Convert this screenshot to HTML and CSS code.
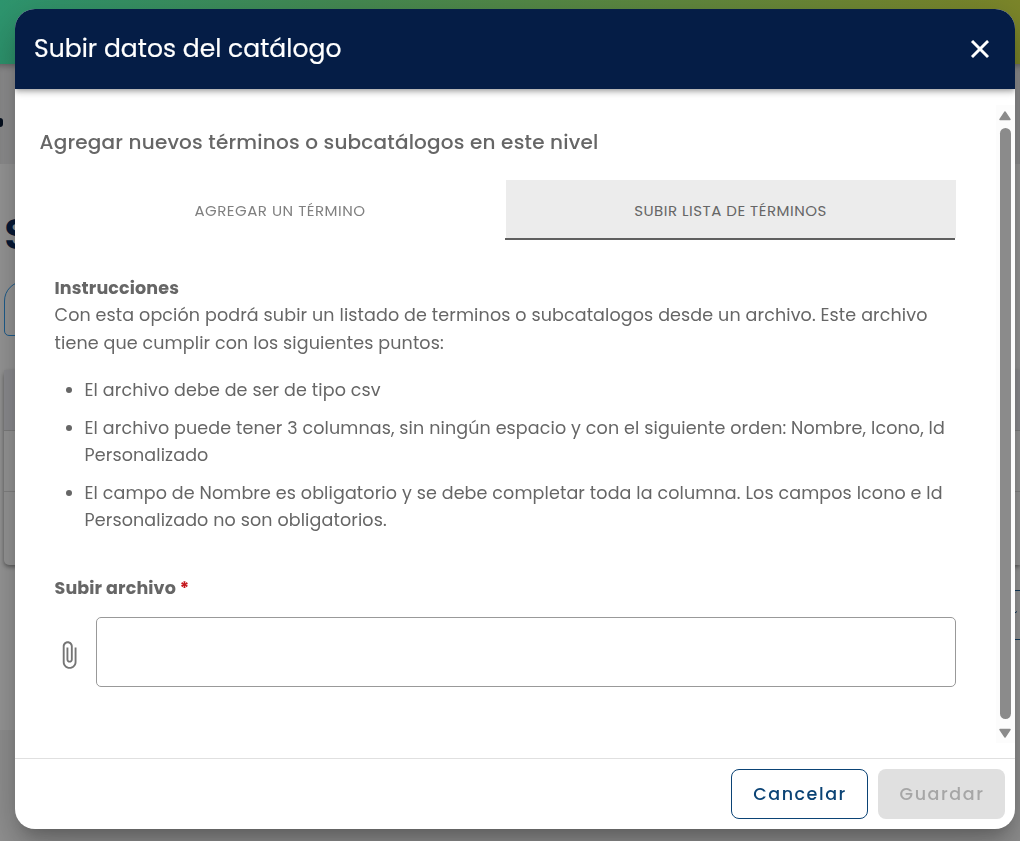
FILE: index.html
```html
<!DOCTYPE html>
<html lang="es">

<head>
    <meta charset="UTF-8">
    <meta name="viewport" content="width=device-width, initial-scale=1.0">
    <title>Subir datos del catálogo</title>
    <link rel="stylesheet" href="styles.css">
</head>

<body>
    <!-- Page behind the dialog -->
    <div class="page" aria-hidden="true">
        <div class="topbar"></div>
        <div class="subheader"><span class="dot"></span></div>
        <div class="content">
            <div class="page-title">S</div>
            <div class="search"></div>
            <div class="table">
                <div class="table-head"></div>
                <div class="table-row"></div>
                <div class="table-row last"></div>
            </div>
            <div class="page-select">
                <svg width="10" height="6" viewBox="0 0 10 6"><path d="M4 4.500 7 2.500" /></svg>
            </div>
        </div>
    </div>

    <div class="dialog" role="dialog" aria-labelledby="dialog-title">
        <header class="dialog-header">
            <h1 id="dialog-title">Subir datos del catálogo</h1>
            <button class="close" aria-label="Cerrar">
                <svg width="30" height="30" viewBox="0 0 24 24"><path d="M19 6.41 17.59 5 12 10.59 6.41 5 5 6.41 10.59 12 5 17.59 6.41 19 12 13.41 17.59 19 19 17.59 13.41 12z" /></svg>
            </button>
        </header>

        <div class="dialog-body">
            <div class="form">
                <h2>Agregar nuevos términos o subcatálogos en este nivel</h2>

                <div class="tabs">
                    <button class="tab">AGREGAR UN TÉRMINO</button>
                    <button class="tab active">SUBIR LISTA DE TÉRMINOS</button>
                </div>

                <div class="instructions">
                    <h3>Instrucciones</h3>
                    <p>Con esta opción podrá subir un listado de terminos o subcatalogos desde un archivo. Este archivo<br>tiene que cumplir con los siguientes puntos:</p>
                    <ul>
                        <li>El archivo debe de ser de tipo csv</li>
                        <li>El archivo puede tener 3 columnas, sin ningún espacio y con el siguiente orden: Nombre, Icono, Id<br>Personalizado</li>
                        <li>El campo de Nombre es obligatorio y se debe completar toda la columna. Los campos Icono e Id<br>Personalizado no son obligatorios.</li>
                    </ul>
                </div>

                <label class="file-label">Subir archivo <span class="required">*</span></label>
                <div class="file-row">
                    <svg class="clip" width="30" height="30" viewBox="0 0 24 24"><path d="M16.5 6v11.5c0 2.21-1.79 4-4 4s-4-1.79-4-4V5c0-1.38 1.12-2.5 2.5-2.5s2.5 1.12 2.5 2.5v10.5c0 .55-.45 1-1 1s-1-.45-1-1V6H10v9.5c0 1.38 1.12 2.5 2.5 2.5s2.5-1.12 2.5-2.5V5c0-2.21-1.79-4-4-4S7 2.79 7 5v12.5c0 3.04 2.46 5.5 5.5 5.5s5.5-2.46 5.5-5.5V6h-1.5z" /></svg>
                    <div class="file-input"></div>
                </div>
            </div>

            <div class="scrollbar">
                <svg width="14" height="11" viewBox="0 0 14 11"><path d="M7 2 12 9.500H2z" /></svg>
                <div class="thumb"></div>
                <svg width="14" height="11" viewBox="0 0 14 11"><path d="M2 1.500H12L7 9z" /></svg>
            </div>
        </div>

        <footer class="dialog-actions">
            <button class="btn btn-cancel">Cancelar</button>
            <button class="btn btn-save" disabled>Guardar</button>
        </footer>
    </div>
</body>

</html>
```
FILE: styles.css
```css
* {
    box-sizing: border-box;
}

body {
    margin: 0;
    height: 841px;
    overflow: hidden;
    font-family: Poppins, Inter, sans-serif;
    font-size: 17.5px;
    letter-spacing: 0.125px;
    line-height: 27.4px;
    color: #666;
    background: #929292;
}

h1,
h2,
h3,
p,
ul {
    margin: 0;
}

button {
    font-family: inherit;
    padding: 0;
    border: none;
    background: none;
}

/* Page behind */
.page {
    height: 841px;
}

.topbar {
    height: 64px;
    background: linear-gradient(90deg, #2e966f, #458b53 34%, #7d872a);
}

.subheader {
    height: 100px;
    padding-top: 54px;
    background: #909091;
    box-shadow: inset 0 6px 6px -4px rgba(0, 0, 0, 0.3);
}

.dot {
    display: block;
    width: 3px;
    height: 9px;
    border-radius: 0 5px 5px 0;
    background: #05101f;
}

.content {
    height: 566px;
    padding: 46px 0 0 4px;
    background: #999;
}

.page-title {
    height: 71px;
    font-size: 43px;
    font-weight: 600;
    line-height: 48px;
    color: #071a38;
}

.search {
    width: 500px;
    height: 55px;
    border: 1px solid #1f5f90;
    border-radius: 20px 0 0 5px;
}

.table {
    height: 195px;
    margin-top: 34px;
    border-radius: 5px 0 0 5px;
    background: #999;
    box-shadow: 0 2px 4px rgba(0, 0, 0, 0.4);
}

.table-head {
    height: 61px;
    border-bottom: 1px solid #808080;
    background: #8f8f93;
}

.table-row {
    height: 61px;
    border-bottom: 1px solid #858585;
}

.table-row.last {
    border: none;
}

.page-select {
    display: flex;
    justify-content: flex-end;
    width: 100px;
    height: 50px;
    margin: 25px 0 0 auto;
    padding-top: 18px;
    border: 1px solid #123a5c;
    border-width: 1px 0;
}

.page-select svg {
    fill: none;
    stroke: #123a5c;
}

/* Dialog */
.dialog {
    position: fixed;
    top: 9px;
    left: 15px;
    display: flex;
    flex-direction: column;
    width: 1000px;
    height: 820px;
    overflow: hidden;
    border-radius: 20px;
    background: #fff;
    box-shadow: 0 11px 15px -7px rgba(0, 0, 0, 0.2), 0 24px 38px 3px rgba(0, 0, 0, 0.14), 0 9px 46px 8px rgba(0, 0, 0, 0.12);
}

.dialog-header {
    display: flex;
    align-items: center;
    justify-content: space-between;
    flex: none;
    height: 80px;
    padding: 0 20.500px 0 19px;
    color: #fff;
    background: #051d46;
    box-shadow: 0 2px 4px -1px rgba(0, 0, 0, 0.2), 0 4px 5px rgba(0, 0, 0, 0.14), 0 1px 10px rgba(0, 0, 0, 0.12);
}

.dialog-header h1 {
    font-size: 25px;
    font-weight: 400;
    letter-spacing: 0.03px;
    -webkit-text-stroke: 0.2px #fff;
}

.close {
    height: 30px;
}

.close svg {
    fill: #fff;
    stroke: #fff;
    stroke-width: 0.4;
}

.dialog-body {
    display: flex;
    flex: none;
    justify-content: space-between;
    height: 669px;
}

.form {
    width: 941px;
    padding: 40px 0 0 24.500px;
}

.form h2 {
    font-size: 20px;
    font-weight: 500;
    letter-spacing: 0.19px;
}

.tabs {
    display: flex;
    height: 60px;
    margin: 24px 0 0 0.5px;
}

.tab {
    width: 450px;
    padding: 1px 1px 0 0;
    font-size: 15px;
    letter-spacing: 0.5px;
    color: #808080;
}

.tab:first-child {
    width: 466px;
    padding-left: 15px;
}

.tab.active {
    position: relative;
    color: #666;
    background: #ececec;
}

/* Ink bar under the selected tab */
.tab.active::after {
    content: "";
    position: absolute;
    bottom: 0;
    left: -1px;
    width: 100%;
    height: 2px;
    background: #5f5f5f;
    box-shadow: 1px 0 #fff;
}

.instructions {
    margin: 34.500px 0 0 15px;
    white-space: nowrap;
}

.instructions h3,
.file-label {
    font-size: 17.5px;
    font-weight: 700;
}

.instructions ul {
    margin-top: 20px;
    padding-left: 30px;
}

.instructions li {
    margin-bottom: 10.300px;
}

.file-label {
    display: block;
    margin: 40.600px 0 0 15px;
}

.required {
    color: #c4161c;
}

.file-row {
    display: flex;
    align-items: center;
    gap: 12px;
    margin: 14.500px 0 0 14.500px;
}

.clip {
    flex: none;
    margin-top: 6px;
    fill: #757575;
}

.file-input {
    flex: none;
    width: 860px;
    height: 70px;
    border: 1px solid #999;
    border-radius: 5px;
}

.scrollbar {
    display: flex;
    flex-direction: column;
    align-items: center;
    justify-content: space-between;
    width: 19px;
    height: 638px;
    margin-top: 16px;
    padding: 5px 1px 4px 0;
    background: #fcfcfc;
}

.scrollbar svg {
    fill: #8b8b8b;
    stroke: #8b8b8b;
    stroke-linejoin: round;
    stroke-width: 1.5;
}

.thumb {
    width: 11px;
    height: 591px;
    margin-bottom: 2px;
    border-radius: 6px;
    background: #8b8b8b;
}

.dialog-actions {
    display: flex;
    justify-content: flex-end;
    gap: 10px;
    flex: 1;
    padding: 10px;
    border-top: 1px solid #e0e0e0;
}

.btn {
    height: 50px;
    padding: 0 0 1px 1px;
    border-radius: 8px;
    font-size: 17.5px;
    font-weight: 500;
    letter-spacing: 1.56px;
}

.btn-cancel {
    width: 137px;
    border: 1px solid #0b4375;
    color: #0b4375;
}

.btn-save {
    width: 127px;
    color: #a6a6a6;
    background: #e0e0e0;
}
```
